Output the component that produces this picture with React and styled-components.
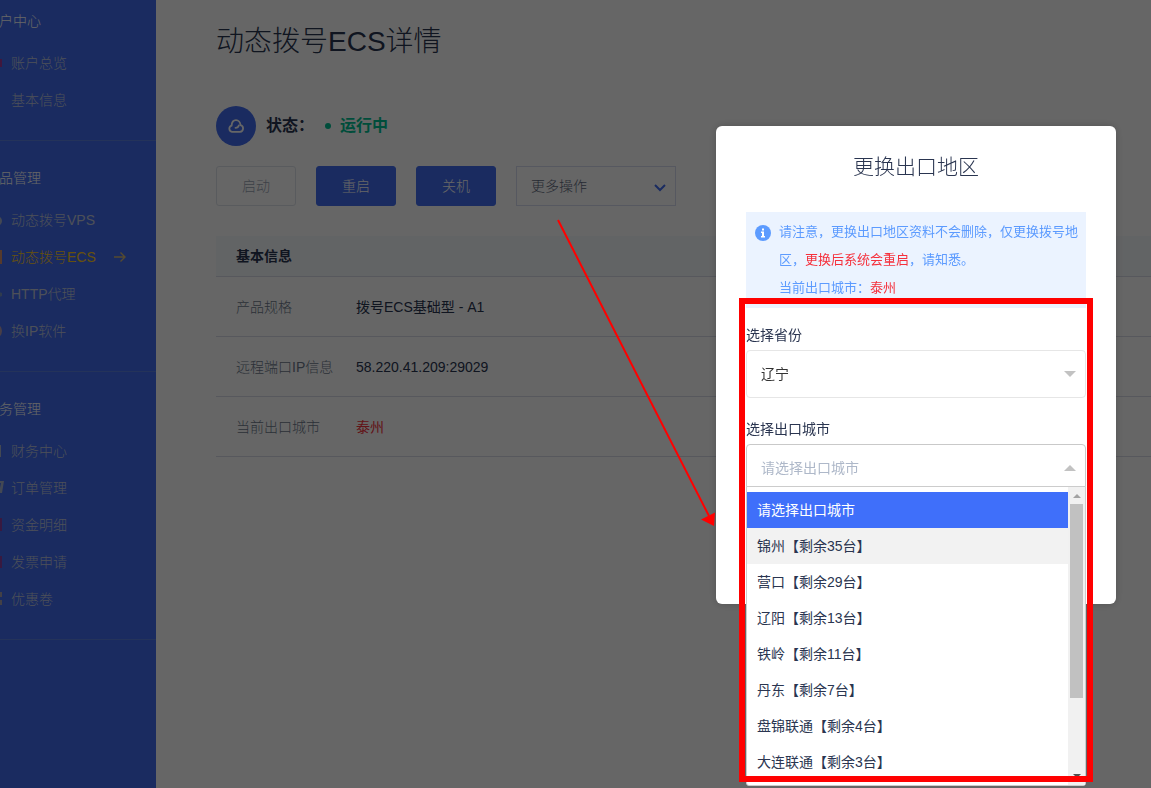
import React, { useState } from "react";
import styled, { createGlobalStyle } from "styled-components";

const GlobalStyle = createGlobalStyle`
  *, *::before, *::after { box-sizing: border-box; }
  body {
    margin: 0;
    background: #fff;
    color: #2a3550;
    font: 400 14px/20px "Liberation Sans", "Noto Sans CJK SC", sans-serif;
  }
  button, select { font: inherit; }
  ul { list-style: none; margin: 0; padding: 0; }
`;

const Page = styled.div`
  display: flex;
  min-height: 100vh;
`;

const Sidebar = styled.aside`
  flex: 0 0 156px;
  overflow: hidden;
  background: #416cf0;
`;

const SidebarScroll = styled.nav`
  margin: -16px 0 0 -44px;
`;

const NavGroup = styled.section`
  padding: 21px 0 22px;
  border-bottom: 1px solid #5b80e0;
`;

const NavTitle = styled.h2`
  margin: 0 0 7px;
  padding-left: 29px;
  font-size: 14px;
  line-height: 32px;
  font-weight: 300;
  color: #fff;
`;

const NavLink = styled.a`
  display: flex;
  align-items: center;
  height: 37px;
  padding-left: 30px;
  font-weight: 300;
  text-decoration: none;
  color: ${(p) => (p.$active ? "#ffca1c" : "#c0c8dc")};
`;

const NavIcon = styled.svg`
  flex: none;
  width: 16px;
  height: 16px;
  margin-right: 9px;
  fill: ${(p) => p.$color};
`;

const NavArrow = styled.svg`
  width: 12px;
  height: 12px;
  margin-left: 18px;
  fill: none;
  stroke: #d5b876;
  stroke-width: 1.4;
`;

const Main = styled.main`
  flex: 1;
  min-width: 0;
  padding: 22px 0 0 60px;
`;

const PageTitle = styled.h1`
  margin: 0 0 44px;
  font-size: 28px;
  line-height: 40px;
  font-weight: 300;
`;

const StatusRow = styled.div`
  display: flex;
  align-items: center;
  height: 40px;
  font-size: 16px;
  font-weight: 700;
`;

const StatusIcon = styled.span`
  display: grid;
  place-items: center;
  width: 40px;
  height: 40px;
  margin-right: 10px;
  border-radius: 50%;
  background: #416cf0;
`;

const StatusValue = styled.span`
  display: flex;
  align-items: center;
  gap: 9px;
  margin-left: 11px;
  color: #00c193;
  &::before {
    content: "";
    width: 6px;
    height: 6px;
    border-radius: 50%;
    background: currentColor;
  }
`;

const Toolbar = styled.div`
  display: flex;
  gap: 20px;
  margin: 20px 0 30px;
`;

const ActionButton = styled.button`
  width: 80px;
  height: 40px;
  padding: 0;
  border: 1px solid #416cf0;
  border-radius: 3px;
  background: #416cf0;
  font-weight: 300;
  color: #fff;
  &:disabled {
    border-color: #dfe4ec;
    background: transparent;
    color: #9aa3b3;
  }
`;

const SelectWrap = styled.span`
  position: relative;
  display: block;
`;

const MoreSelect = styled.select`
  appearance: none;
  width: 160px;
  height: 40px;
  padding: 0 14px;
  border: 1px solid #d7dcef;
  border-radius: 0;
  background: transparent;
  font-weight: 300;
  color: #5f6a7e;
`;

const Chevron = styled.svg`
  position: absolute;
  right: 10px;
  top: 17px;
  width: 12px;
  height: 10px;
  fill: none;
  stroke: #416cf0;
  stroke-width: 2;
  pointer-events: none;
`;

const InfoTable = styled.table`
  width: 100%;
  border-spacing: 0;
  text-align: left;
`;

const TableHead = styled.th`
  height: 41px;
  padding: 0 20px;
  border-bottom: 1px solid #d9dce8;
  background: #f6f9fc;
  font-weight: 700;
`;

const RowLabel = styled.th`
  width: 140px;
  height: 60px;
  padding: 0 0 0 20px;
  border-bottom: 1px solid #d9dce8;
  font-weight: 300;
  white-space: nowrap;
  color: #6d788b;
`;

const RowValue = styled.td`
  padding: 0;
  border-bottom: 1px solid #d9dce8;
  color: ${(p) => (p.$alert ? "#f5303c" : "#2a3550")};
`;

const Overlay = styled.div`
  position: fixed;
  inset: 0;
  display: flex;
  align-items: flex-start;
  justify-content: flex-end;
  padding: 126px 35px 0;
  background: rgba(0, 0, 0, 0.6);
`;

const Dialog = styled.section`
  position: relative;
  width: 400px;
  padding: 26px 30px 112px;
  border-radius: 6px;
  background: #fff;
  box-shadow: 0 0 8px rgba(0, 0, 0, 0.2);
`;

const DialogTitle = styled.h2`
  margin: 0 0 30px;
  text-align: center;
  font-size: 21px;
  line-height: 30px;
  font-weight: 300;
`;

const Notice = styled.div`
  display: flex;
  gap: 8px;
  height: 96px;
  padding: 6px 4px 6px 9px;
  margin-bottom: 16px;
  background: #ebf3ff;
  color: #5c9bff;
  font-size: 13px;
  line-height: 28px;
`;

const NoticeIcon = styled.svg`
  flex: none;
  width: 16px;
  height: 16px;
  margin-top: 7px;
`;

const NoticeText = styled.p`
  margin: 0;
`;

const Alert = styled.span`
  color: #f5303c;
`;

const Field = styled.div`
  position: relative;
  & + & { margin-top: 20px; }
`;

const FieldLabel = styled.label`
  display: block;
  height: 26px;
  line-height: 22px;
`;

const FieldSelect = styled.select`
  display: block;
  appearance: none;
  width: 100%;
  height: 48px;
  padding: 0 14px;
  border: 1px solid ${(p) => (p.$open ? "#c9c9c9" : "#e6e6e6")};
  border-radius: 4px;
  background: #fff;
  color: ${(p) => (p.$open ? "#aeb8c9" : "#333")};
`;

const Caret = styled.svg`
  position: absolute;
  right: 10px;
  top: 21px;
  width: 12px;
  height: 6px;
  fill: #c2c2c2;
  pointer-events: none;
`;

const Menu = styled.div`
  position: absolute;
  z-index: 1;
  top: 68px;
  left: 0;
  right: 0;
  display: flex;
  height: 300px;
  border: 1px solid #ccc;
  border-radius: 0 0 3px 3px;
  background: #fff;
`;

const OptionList = styled.ul`
  flex: 1;
  && { padding-top: 5px; }
`;

const Option = styled.li`
  height: 36px;
  padding-left: 10px;
  line-height: 36px;
  cursor: pointer;
  background: ${(p) => (p.$selected ? "#3f6ffa" : p.$hover ? "#f2f2f2" : "#fff")};
  color: ${(p) => (p.$selected ? "#fff" : "#2a3550")};
`;

const ScrollTrack = styled.div`
  display: flex;
  flex-direction: column;
  align-items: center;
  justify-content: space-between;
  width: 17px;
  padding: 7px 0;
  background: #f1f1f1;
`;

const ScrollThumb = styled.span`
  width: 13px;
  height: 194px;
  margin: 6px 0 auto;
  background: #c1c1c1;
`;

const ScrollArrow = styled.svg`
  width: 8px;
  height: 4px;
  fill: ${(p) => p.$color};
`;

const HighlightFrame = styled.div`
  position: absolute;
  z-index: 2;
  top: 172px;
  left: 23px;
  width: 354px;
  height: 484px;
  border: 6px solid #f00;
  pointer-events: none;
`;

const PointerArrow = styled.svg`
  position: absolute;
  top: 90px;
  left: -160px;
  width: 160px;
  height: 312px;
  pointer-events: none;
`;

const navGroups = [
  {
    title: "账户中心",
    items: [
      { label: "账户总览", color: "#a03a9a", shape: <path d="M1 4h15v8H1z" /> },
      { label: "基本信息", color: "#a9b3cf", shape: <path d="M2 3h10v10H2z" /> },
    ],
  },
  {
    title: "产品管理",
    items: [
      { label: "动态拨号VPS", color: "#a9b3cf", shape: <circle cx="11" cy="9" r="5" /> },
      { label: "动态拨号ECS", color: "#d6926f", shape: <path d="M1 1h15v14H1z" />, active: true },
      { label: "HTTP代理", color: "#7695c4", shape: <path d="M8 4l8 3v3l-8 3z" /> },
      { label: "换IP软件", color: "#b59cb0", shape: <circle cx="8" cy="8" r="8" /> },
    ],
  },
  {
    title: "财务管理",
    items: [
      { label: "财务中心", color: "#a9b3cf", shape: <path d="M2 2h13v12H2z" /> },
      {
        label: "订单管理",
        color: "#a9b3cf",
        shape: <path d="M11 1h7l-2 12h-3l2-10h-4z" />,
      },
      { label: "资金明细", color: "#8c3fa0", shape: <path d="M1 1h15v13H1z" /> },
      { label: "发票申请", color: "#8c3fa0", shape: <path d="M1 2h15v12H1z" /> },
      { label: "优惠卷", color: "#a9a0b0", shape: <path d="M1 1h15v5H1zM1 9h15v5H1z" /> },
    ],
  },
];

const details = [
  { label: "产品规格", value: "拨号ECS基础型 - A1" },
  { label: "远程端口IP信息", value: "58.220.41.209:29029" },
  { label: "当前出口城市", value: "泰州", alert: true },
];

const cities = [
  "请选择出口城市",
  "锦州【剩余35台】",
  "营口【剩余29台】",
  "辽阳【剩余13台】",
  "铁岭【剩余11台】",
  "丹东【剩余7台】",
  "盘锦联通【剩余4台】",
  "大连联通【剩余3台】",
];

export default function App() {
  const [city, setCity] = useState(cities[0]);

  return (
    <>
      <GlobalStyle />
      <Page>
        <Sidebar>
          <SidebarScroll>
            {navGroups.map((group) => (
              <NavGroup key={group.title}>
                <NavTitle>{group.title}</NavTitle>
                {group.items.map((item) => (
                  <NavLink key={item.label} href="#" $active={item.active}>
                    <NavIcon $color={item.color} viewBox="0 0 16 16" overflow="visible">
                      {item.shape}
                    </NavIcon>
                    {item.label}
                    {item.active && (
                      <NavArrow viewBox="0 0 12 12">
                        <path d="M0 6h11M6.5 1.5L11 6l-4.500 4.500" />
                      </NavArrow>
                    )}
                  </NavLink>
                ))}
              </NavGroup>
            ))}
          </SidebarScroll>
        </Sidebar>

        <Main>
          <PageTitle>动态拨号ECS详情</PageTitle>
          <StatusRow>
            <StatusIcon>
              <svg width="16" height="14" viewBox="0 0 16 14" fill="none" stroke="#fff" strokeWidth="1.800" strokeLinecap="round">
                <path d="M4 12.800a3.200 3.200 0 0 1-.4-6.200C3.800 3.300 5.600 1.200 8 1.200s4.300 2 4.400 4.900a3.400 3.400 0 0 1-.4 6.700z" />
                <path d="M7.500 8.800c1.800 0 2.900-.8 3.300-2.300" />
              </svg>
            </StatusIcon>
            状态：
            <StatusValue>运行中</StatusValue>
          </StatusRow>
          <Toolbar>
            <ActionButton type="button" disabled>启动</ActionButton>
            <ActionButton type="button">重启</ActionButton>
            <ActionButton type="button">关机</ActionButton>
            <SelectWrap>
              <MoreSelect aria-label="更多操作">
                <option>更多操作</option>
              </MoreSelect>
              <Chevron viewBox="0 0 12 10">
                <path d="M1 2l5 5 5-5" />
              </Chevron>
            </SelectWrap>
          </Toolbar>
          <InfoTable>
            <thead>
              <tr>
                <TableHead colSpan={2}>基本信息</TableHead>
              </tr>
            </thead>
            <tbody>
              {details.map((row) => (
                <tr key={row.label}>
                  <RowLabel scope="row">{row.label}</RowLabel>
                  <RowValue $alert={row.alert}>{row.value}</RowValue>
                </tr>
              ))}
            </tbody>
          </InfoTable>
        </Main>
      </Page>

      <Overlay>
        <Dialog role="dialog" aria-labelledby="dialog-title">
          <DialogTitle id="dialog-title">更换出口地区</DialogTitle>
          <Notice>
            <NoticeIcon viewBox="0 0 16 16">
              <circle cx="8" cy="8" r="8" fill="#5c9bff" />
              <path d="M7 3.500h2v2H7zM6 6.500h3v4.500h1v1.500H6V11h1V8H6z" fill="#fff" />
            </NoticeIcon>
            <NoticeText>
              请注意，更换出口地区资料不会删除，仅更换拨号地区，<Alert>更换后系统会重启</Alert>，请知悉。
              <br />
              当前出口城市：<Alert>泰州</Alert>
            </NoticeText>
          </Notice>

          <Field>
            <FieldLabel htmlFor="province">选择省份</FieldLabel>
            <SelectWrap>
              <FieldSelect id="province">
                <option>辽宁</option>
              </FieldSelect>
              <Caret viewBox="0 0 12 6">
                <path d="M0 0h12L6 6z" />
              </Caret>
            </SelectWrap>
          </Field>

          <Field>
            <FieldLabel htmlFor="city">选择出口城市</FieldLabel>
            <SelectWrap>
              <FieldSelect
                id="city"
                $open
                value={city}
                onChange={(e) => setCity(e.target.value)}
              >
                {cities.map((name) => (
                  <option key={name}>{name}</option>
                ))}
              </FieldSelect>
              <Caret viewBox="0 0 12 6">
                <path d="M0 6h12L6 0z" />
              </Caret>
            </SelectWrap>
            <Menu>
              <OptionList role="listbox" aria-label="选择出口城市">
                {cities.map((name, index) => (
                  <Option
                    key={name}
                    role="option"
                    aria-selected={name === city}
                    $selected={name === city}
                    $hover={index === 1}
                    onClick={() => setCity(name)}
                  >
                    {name}
                  </Option>
                ))}
              </OptionList>
              <ScrollTrack>
                <ScrollArrow $color="#a3a3a3" viewBox="0 0 8 4">
                  <path d="M0 4h8L4 0z" />
                </ScrollArrow>
                <ScrollThumb />
                <ScrollArrow $color="#505050" viewBox="0 0 8 4">
                  <path d="M0 0h8L4 4z" />
                </ScrollArrow>
              </ScrollTrack>
            </Menu>
          </Field>

          <HighlightFrame />
          <PointerArrow viewBox="0 0 160 312" fill="#f00">
            <path d="M2 4L153 300" stroke="#f00" strokeWidth="2" />
            <path d="M158 310L145 303.500 159 296.500z" />
          </PointerArrow>
        </Dialog>
      </Overlay>
    </>
  );
}
